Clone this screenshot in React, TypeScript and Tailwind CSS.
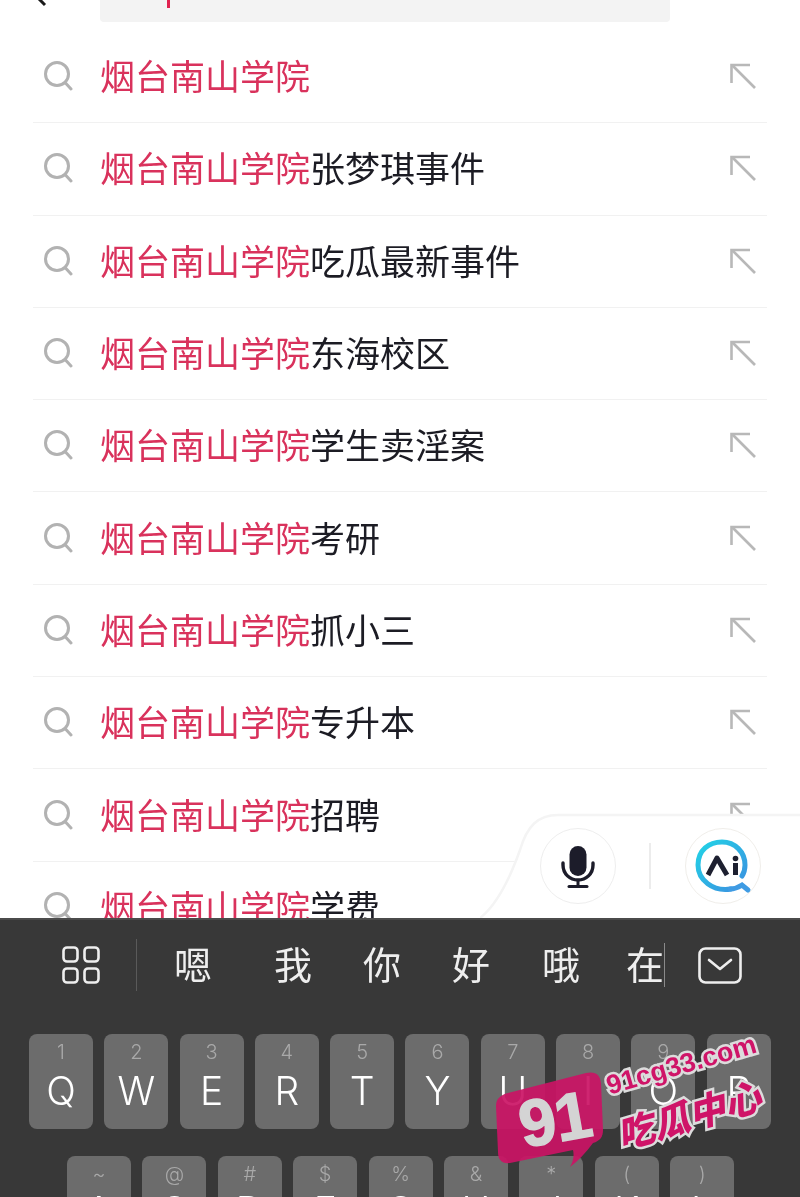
import React from "react";

const rows = ["", "张梦琪事件", "吃瓜最新事件", "东海校区", "学生卖淫案", "考研", "抓小三", "专升本", "招聘", "学费"];
const row1 = [["1","Q"],["2","W"],["3","E"],["4","R"],["5","T"],["6","Y"],["7","U"],["8","I"],["9","O"],["0","P"]];
const row2 = [["~","A"],["@","S"],["#","D"],["$","F"],["%","G"],["&","H"],["*","J"],["(","K"],[")","L"]];
const cjk = "font-['Noto_Sans_CJK_SC','Noto_Sans_CJK_JP',sans-serif]";

function SearchIcon() {
  return (
    <svg width="30" height="30" viewBox="0 0 30 30" fill="none" stroke="#b2b2b2" strokeWidth="3" strokeLinecap="round" className="shrink-0">
      <circle cx="14" cy="13" r="11.5" />
      <path d="M22.5 22 L28 28" />
    </svg>
  );
}

function ArrowIcon() {
  return (
    <svg width="26" height="26" viewBox="0 0 26 26" fill="none" stroke="#b8b8b8" strokeWidth="2.6" className="shrink-0">
      <path d="M1.5 20 V2 H20" />
      <path d="M2 2 L25 25" />
    </svg>
  );
}

function Row({ suffix, last }: { suffix: string; last: boolean }) {
  return (
    <div className={`mx-[33px] h-[92.3px] shrink-0 flex items-center pb-[1px] pr-[11px] pl-[10px] ${last ? "" : "border-b-[1.5px] border-[#f1f1f1]"}`}>
      <SearchIcon />
      <div className={`ml-[27px] -mt-[2px] flex-1 text-[35px] leading-[46px] whitespace-nowrap text-[#1c1c24] ${cjk}`}>
        <span className="text-[#d9325c]">烟台南山学院</span>
        {suffix}
      </div>
      <ArrowIcon />
    </div>
  );
}

function Key({ top, letter, tight }: { top: string; letter: string; tight?: boolean }) {
  return (
    <div className="w-[64px] h-[95px] shrink-0 rounded-lg bg-[#6c6c6c] flex flex-col items-center font-['Inter',sans-serif]">
      <span className="mt-[7px] text-[20px] leading-[22px] font-light text-[#a9a9a9]">{top}</span>
      <span className={`${tight ? "mt-[3px]" : "mt-[5px]"} text-[39px] leading-[46px] font-[350] text-white`}>{letter}</span>
    </div>
  );
}

function AiLogo() {
  return (
    <svg width="60" height="60" viewBox="0 0 60 60" fill="none">
      <defs>
        <linearGradient id="ring" x1="0" y1="0" x2="1" y2="1">
          <stop offset="0" stopColor="#22d3e6" />
          <stop offset="1" stopColor="#3b8fe0" />
        </linearGradient>
      </defs>
      <path d="M38 53 C20 56 5 44 5 29 C5 14 16 6 29 6 C42 6 52 16 52 29 C52 34 51 37 49 40" stroke="url(#ring)" strokeWidth="5" strokeLinecap="round" />
      <path d="M37 53 C42 53 46 51 49 49 L55 54" stroke="#3f9be3" strokeWidth="5" strokeLinecap="round" />
      <path d="M15 39 L24 22 L34 39" stroke="#1d2030" strokeWidth="5" strokeLinejoin="round" />
      <rect x="40" y="27" width="5" height="12" fill="#1d2030" />
      <circle cx="42.5" cy="22.5" r="2.8" fill="#1d2030" />
    </svg>
  );
}

function MicIcon() {
  return (
    <svg width="34" height="44" viewBox="0 0 34 44" fill="none">
      <rect x="8.5" y="2" width="17" height="30" rx="8.5" fill="#1c1c2a" />
      <path d="M2 19 V21 C2 30 9 36 17 36 C25 36 32 30 32 21 V19" stroke="#1c1c2a" strokeWidth="3.4" strokeLinecap="round" />
      <path d="M17 36 V42" stroke="#1c1c2a" strokeWidth="3" />
      <path d="M8 42.5 H26" stroke="#1c1c2a" strokeWidth="3" strokeLinecap="round" />
    </svg>
  );
}

function VoicePanel() {
  return (
    <div className="absolute left-[480px] top-[812px] w-[320px] h-[106px] flex items-center pt-[2px] pl-[60px]">
      <svg className="absolute inset-0" width="320" height="106" viewBox="0 0 320 106" fill="none">
        <path d="M0 106 C18 92 30 66 40 38 C47 14 58 3 78 3 H322 V110 H0 Z" fill="#ffffff" stroke="#f4f4f4" strokeWidth="2.5" />
      </svg>
      <div className="relative w-[76px] h-[76px] rounded-full border border-[#eeeeee] bg-white flex items-center justify-center shrink-0">
        <MicIcon />
      </div>
      <div className="relative ml-[33px] w-[1.5px] h-[46px] bg-[#ececec] shrink-0" />
      <div className="relative ml-[34px] w-[76px] h-[76px] rounded-full border border-[#f0eeea] bg-white flex items-center justify-center shrink-0">
        <AiLogo />
      </div>
    </div>
  );
}

function Watermark() {
  return (
    <div className="absolute left-[490px] top-[1030px] w-[290px] h-[140px]">
      <svg className="absolute left-0 top-[36px]" width="120" height="105" viewBox="0 0 120 105" fill="none">
        <path d="M18 27 L96 7 C106 5 110 9 111 17 L113 64 C113 71 110 75 103 77 Q92 92 80 101 Q85 92 83 84 L20 97 C12 98 8 94 8 86 L6 40 C6 33 10 29 18 27 Z" fill="#cb1465" fillOpacity="0.92" />
      </svg>
      <div className="absolute left-[29px] top-[55px] -rotate-[10deg] text-[66px] leading-[68px] font-bold tracking-[-1px] text-[#d4d4d4] [-webkit-text-stroke:1.5px_#d4d4d4] font-['Liberation_Sans',sans-serif]">91</div>
      <div className="absolute left-[117px] top-[40px] -rotate-[16deg] origin-left text-[27px] leading-[32px] font-bold whitespace-nowrap text-[#cf1468] [-webkit-text-stroke:5px_#dcdcdc] [paint-order:stroke_fill] font-['Liberation_Sans',sans-serif]">91cg33.com</div>
      <div className={`absolute left-[127px] top-[84px] -rotate-[16deg] origin-left text-[37px] leading-[40px] font-black italic whitespace-nowrap text-[#cf1468] [-webkit-text-stroke:5px_#dcdcdc] [paint-order:stroke_fill] ${cjk}`}>吃瓜中心</div>
    </div>
  );
}

function Candidates() {
  return (
    <div className={`h-[94px] flex items-center pb-[4px] pl-[62px] text-[38px] leading-[48px] text-[#eeeeee] ${cjk}`}>
      <svg width="38" height="38" viewBox="0 0 38 38" fill="none" stroke="#eeeeee" strokeWidth="2.6" className="shrink-0">
        <rect x="1.5" y="1.5" width="14" height="14" rx="3.5" />
        <rect x="22.5" y="1.5" width="14" height="14" rx="3.5" />
        <rect x="1.5" y="22.5" width="14" height="14" rx="3.5" />
        <rect x="22.5" y="22.5" width="14" height="14" rx="3.5" />
      </svg>
      <div className="ml-[36px] w-[1px] h-[52px] bg-[#5a5a5a] shrink-0" />
      <span className="ml-[36px] w-[40px] text-center -mt-[4px]">嗯</span>
      <span className="ml-[60px] w-[40px] text-center -mt-[4px]">我</span>
      <span className="ml-[49px] w-[40px] text-center -mt-[4px]">你</span>
      <span className="ml-[49px] w-[40px] text-center -mt-[4px]">好</span>
      <span className="ml-[50px] w-[40px] text-center -mt-[4px]">哦</span>
      <span className="ml-[45px] w-[38px] text-center -mt-[4px]">在</span>
      <div className="w-[1px] h-[44px] bg-[#8a8a8a] shrink-0" />
      <svg width="44" height="37" viewBox="0 0 44 37" fill="none" stroke="#eeeeee" strokeWidth="2.6" strokeLinecap="round" strokeLinejoin="round" className="ml-[33px] shrink-0">
        <rect x="1.5" y="1.5" width="41" height="34" rx="6" />
        <path d="M11 13 L22 22 L33 13" />
      </svg>
    </div>
  );
}

export default function App() {
  return (
    <div className="relative w-[800px] h-[1197px] overflow-hidden bg-white flex flex-col blur-[0.5px]">
      <div className="h-[918px] shrink-0 overflow-hidden">
        <div className="h-[22px] flex items-end">
          <svg width="12" height="8" viewBox="0 0 12 8" fill="none" stroke="#1a1a1a" strokeWidth="3" className="ml-[37px] mb-[15px] shrink-0">
            <path d="M2 0 L8 6" />
          </svg>
          <div className="ml-[51px] w-[570px] h-[22px] bg-[#f3f3f3] rounded-br-sm rounded-bl-sm">
            <div className="ml-[67px] w-[3px] h-[8px] bg-[#e0224f]" />
          </div>
        </div>
        <div className="pt-[9px] flex flex-col">
          {rows.map((s, i) => (
            <Row key={i} suffix={s} last={i === rows.length - 1} />
          ))}
        </div>
      </div>
      <VoicePanel />
      <div className="relative flex-1 bg-[#383838] border-t-2 border-[#4b4b4b] overflow-hidden">
        <Candidates />
        <div className="mt-[20px] pl-[29px] flex gap-[11.3px]">
          {row1.map(([t, l]) => <Key key={l} top={t} letter={l} />)}
        </div>
        <div className="mt-[27px] pl-[67px] flex gap-[11.4px]">
          {row2.map(([t, l]) => <Key key={l} top={t} letter={l} tight />)}
        </div>
      </div>
      <Watermark />
    </div>
  );
}
